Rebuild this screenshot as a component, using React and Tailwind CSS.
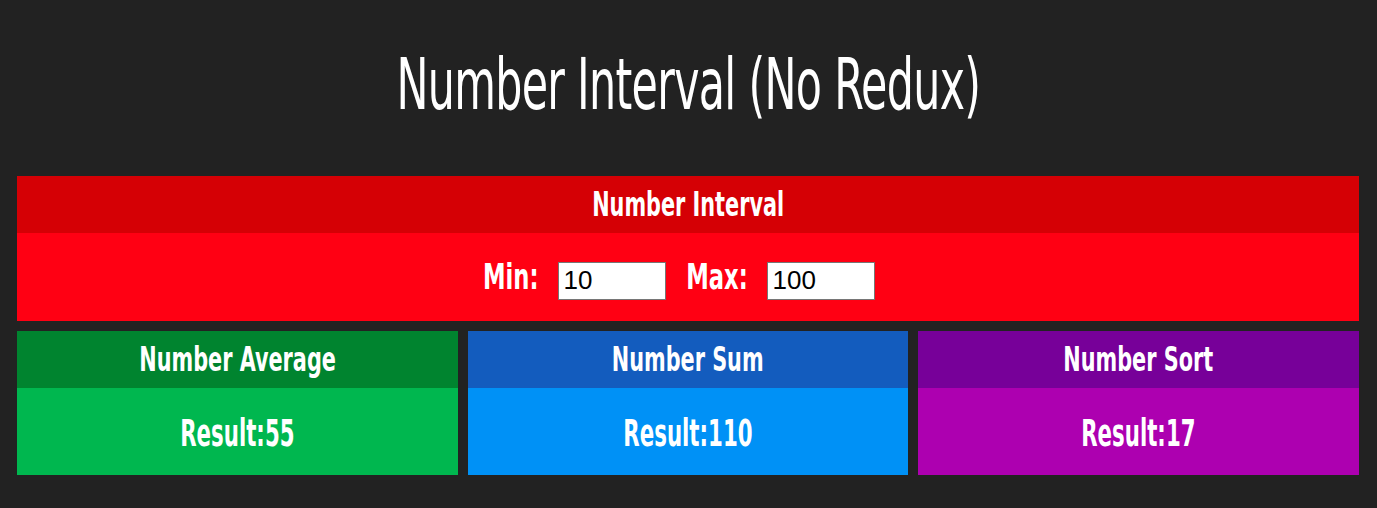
import React from "react";

const font = "font-['DejaVu_Sans_Condensed','DejaVu_Sans',sans-serif]";

function Card({ title, head, body, value }) {
  return (
    <div className="flex flex-col">
      <div className={`h-[57px] flex items-center justify-center text-white text-[34px] font-bold ${font} ${head}`}>
        <span className="inline-block whitespace-nowrap scale-x-[0.68]">{title}</span>
      </div>
      <div className={`h-[87px] flex items-center justify-center pt-[4px] text-white text-[37px] font-bold ${font} ${body}`}>
        <span className="inline-block whitespace-nowrap scale-x-[0.64]">
          Result:<span className="font-extrabold">{value}</span>
        </span>
      </div>
    </div>
  );
}

function Field({ label, labelW, value }) {
  return (
    <div className="flex items-center">
      <label className={`flex justify-center ${labelW} text-white text-[36px] font-bold ${font}`}>
        <span className="inline-block whitespace-nowrap scale-x-[0.7]">{label}</span>
      </label>
      <input
        defaultValue={value}
        className="ml-[20px] mt-[7px] w-[108px] h-[38px] bg-white border border-[#767676] px-[5px] text-black text-[26px] font-['Liberation_Sans',Arial,sans-serif] outline-none"
      />
    </div>
  );
}

export default function App() {
  return (
    <div className="min-h-[508px] bg-[#222222] pl-[17px] pr-[18px]">
      <h1 className={`h-[176px] flex items-center justify-center pb-[8px] text-white text-[72px] font-normal tracking-[-1px] ${font}`}>
        <span className="inline-block whitespace-nowrap scale-x-[0.66]">Number Interval (No Redux)</span>
      </h1>
      <section className="flex flex-col">
        <div className={`h-[57px] bg-[#d50005] flex items-center justify-center text-white text-[34px] font-bold ${font}`}>
          <span className="inline-block whitespace-nowrap scale-x-[0.68]">Number Interval</span>
        </div>
        <div className="h-[88px] bg-[#ff0013] flex items-center justify-center gap-[21px] pr-[18px]">
          <Field label="Min:" labelW="w-[54px]" value="10" />
          <Field label="Max:" labelW="w-[60px]" value="100" />
        </div>
      </section>
      <div className="grid grid-cols-3 gap-[10px] mt-[10px]">
        <Card title="Number Average" head="bg-[#00842f]" body="bg-[#00b74f]" value="55" />
        <Card title="Number Sum" head="bg-[#135cbe]" body="bg-[#0091f6]" value="110" />
        <Card title="Number Sort" head="bg-[#770099]" body="bg-[#ad00b0]" value="17" />
      </div>
    </div>
  );
}
